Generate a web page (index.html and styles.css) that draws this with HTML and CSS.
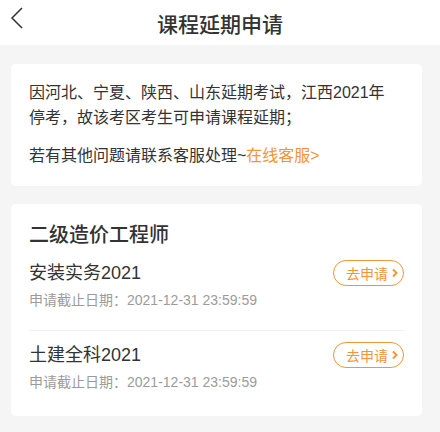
FILE: index.html
```html
<html>
    <head>
        <title>课程延期申请</title>
        <link rel="stylesheet" href="styles.css">
    </head>
    <body>
        <div class="header">
            <svg class="back" width="14" height="22" viewBox="0 0 14 22">
                <path d="M12 1 L2 11 L12 21" fill="none" stroke="#333" stroke-width="1.5"/>
            </svg>
            <h1>课程延期申请</h1>
        </div>
        <div class="page">
            <div class="card notice">
                <p>因河北、宁夏、陕西、山东延期考试，江西2021年停考，故该考区考生可申请课程延期；</p>
                <p>若有其他问题请联系客服处理~<span class="link">在线客服&gt;</span></p>
            </div>
            <div class="card">
                <h2>二级造价工程师</h2>
                <div class="item">
                    <div class="row">
                        <span class="name">安装实务2021</span>
                        <span class="btn">去申请<svg width="8" height="10" viewBox="0 0 8 10"><path d="M2 1.5 L5.5 5 L2 8.5" fill="none" stroke="#f0953a" stroke-width="2"/></svg></span>
                    </div>
                    <div class="date">申请截止日期：2021-12-31 23:59:59</div>
                </div>
                <div class="item">
                    <div class="row">
                        <span class="name">土建全科2021</span>
                        <span class="btn">去申请<svg width="8" height="10" viewBox="0 0 8 10"><path d="M2 1.5 L5.5 5 L2 8.5" fill="none" stroke="#f0953a" stroke-width="2"/></svg></span>
                    </div>
                    <div class="date">申请截止日期：2021-12-31 23:59:59</div>
                </div>
            </div>
        </div>
    </body>
</html>
```

FILE: styles.css
```css
body{
    margin: 0;
    background: #f5f5f5;
    color: #333;
    font-family: "Liberation Sans", "Noto Sans CJK SC", sans-serif;
}

.header{
    height: 45px;
    background: #fff;
    display: flex;
    align-items: center;
    justify-content: center;
    position: relative;
}
.header h1{
    margin: 0;
    font-size: 21px;
    font-weight: 500;
    color: #333;
}
.back{
    position: absolute;
    left: 10px;
    top: 7px;
}

.page{
    padding: 19px 18px 0 11px;
}

.card{
    background: #fff;
    border-radius: 5px;
    padding: 17px 18px 4px 18px;
    margin-bottom: 18px;
}

.notice{
    padding: 16px 26px 18px 18px;
}
.notice p{
    margin: 0;
    font-size: 16px;
    line-height: 25px;
}
.notice p + p{
    margin-top: 13px;
}
.link{
    color: #f0953a;
}

.card h2{
    margin: 0;
    font-size: 20px;
    line-height: 28px;
    font-weight: 500;
}

.item{
    padding: 12px 0 21px 0;
    border-bottom: 1px solid #f0f0f0;
}
.item:last-child{
    border-bottom: none;
}
.row{
    display: flex;
    justify-content: space-between;
    align-items: center;
    height: 24px;
}
.name{
    font-size: 18px;
    line-height: 24px;
}
.btn{
    display: flex;
    align-items: center;
    gap: 3px;
    box-sizing: border-box;
    height: 26px;
    width: 71px;
    padding-left: 12px;
    border: 1px solid #f0953a;
    border-radius: 13px;
    color: #f0953a;
    font-size: 14px;
}
.date{
    margin-top: 6px;
    font-size: 14px;
    line-height: 18px;
    color: #9b9b9b;
}
```
